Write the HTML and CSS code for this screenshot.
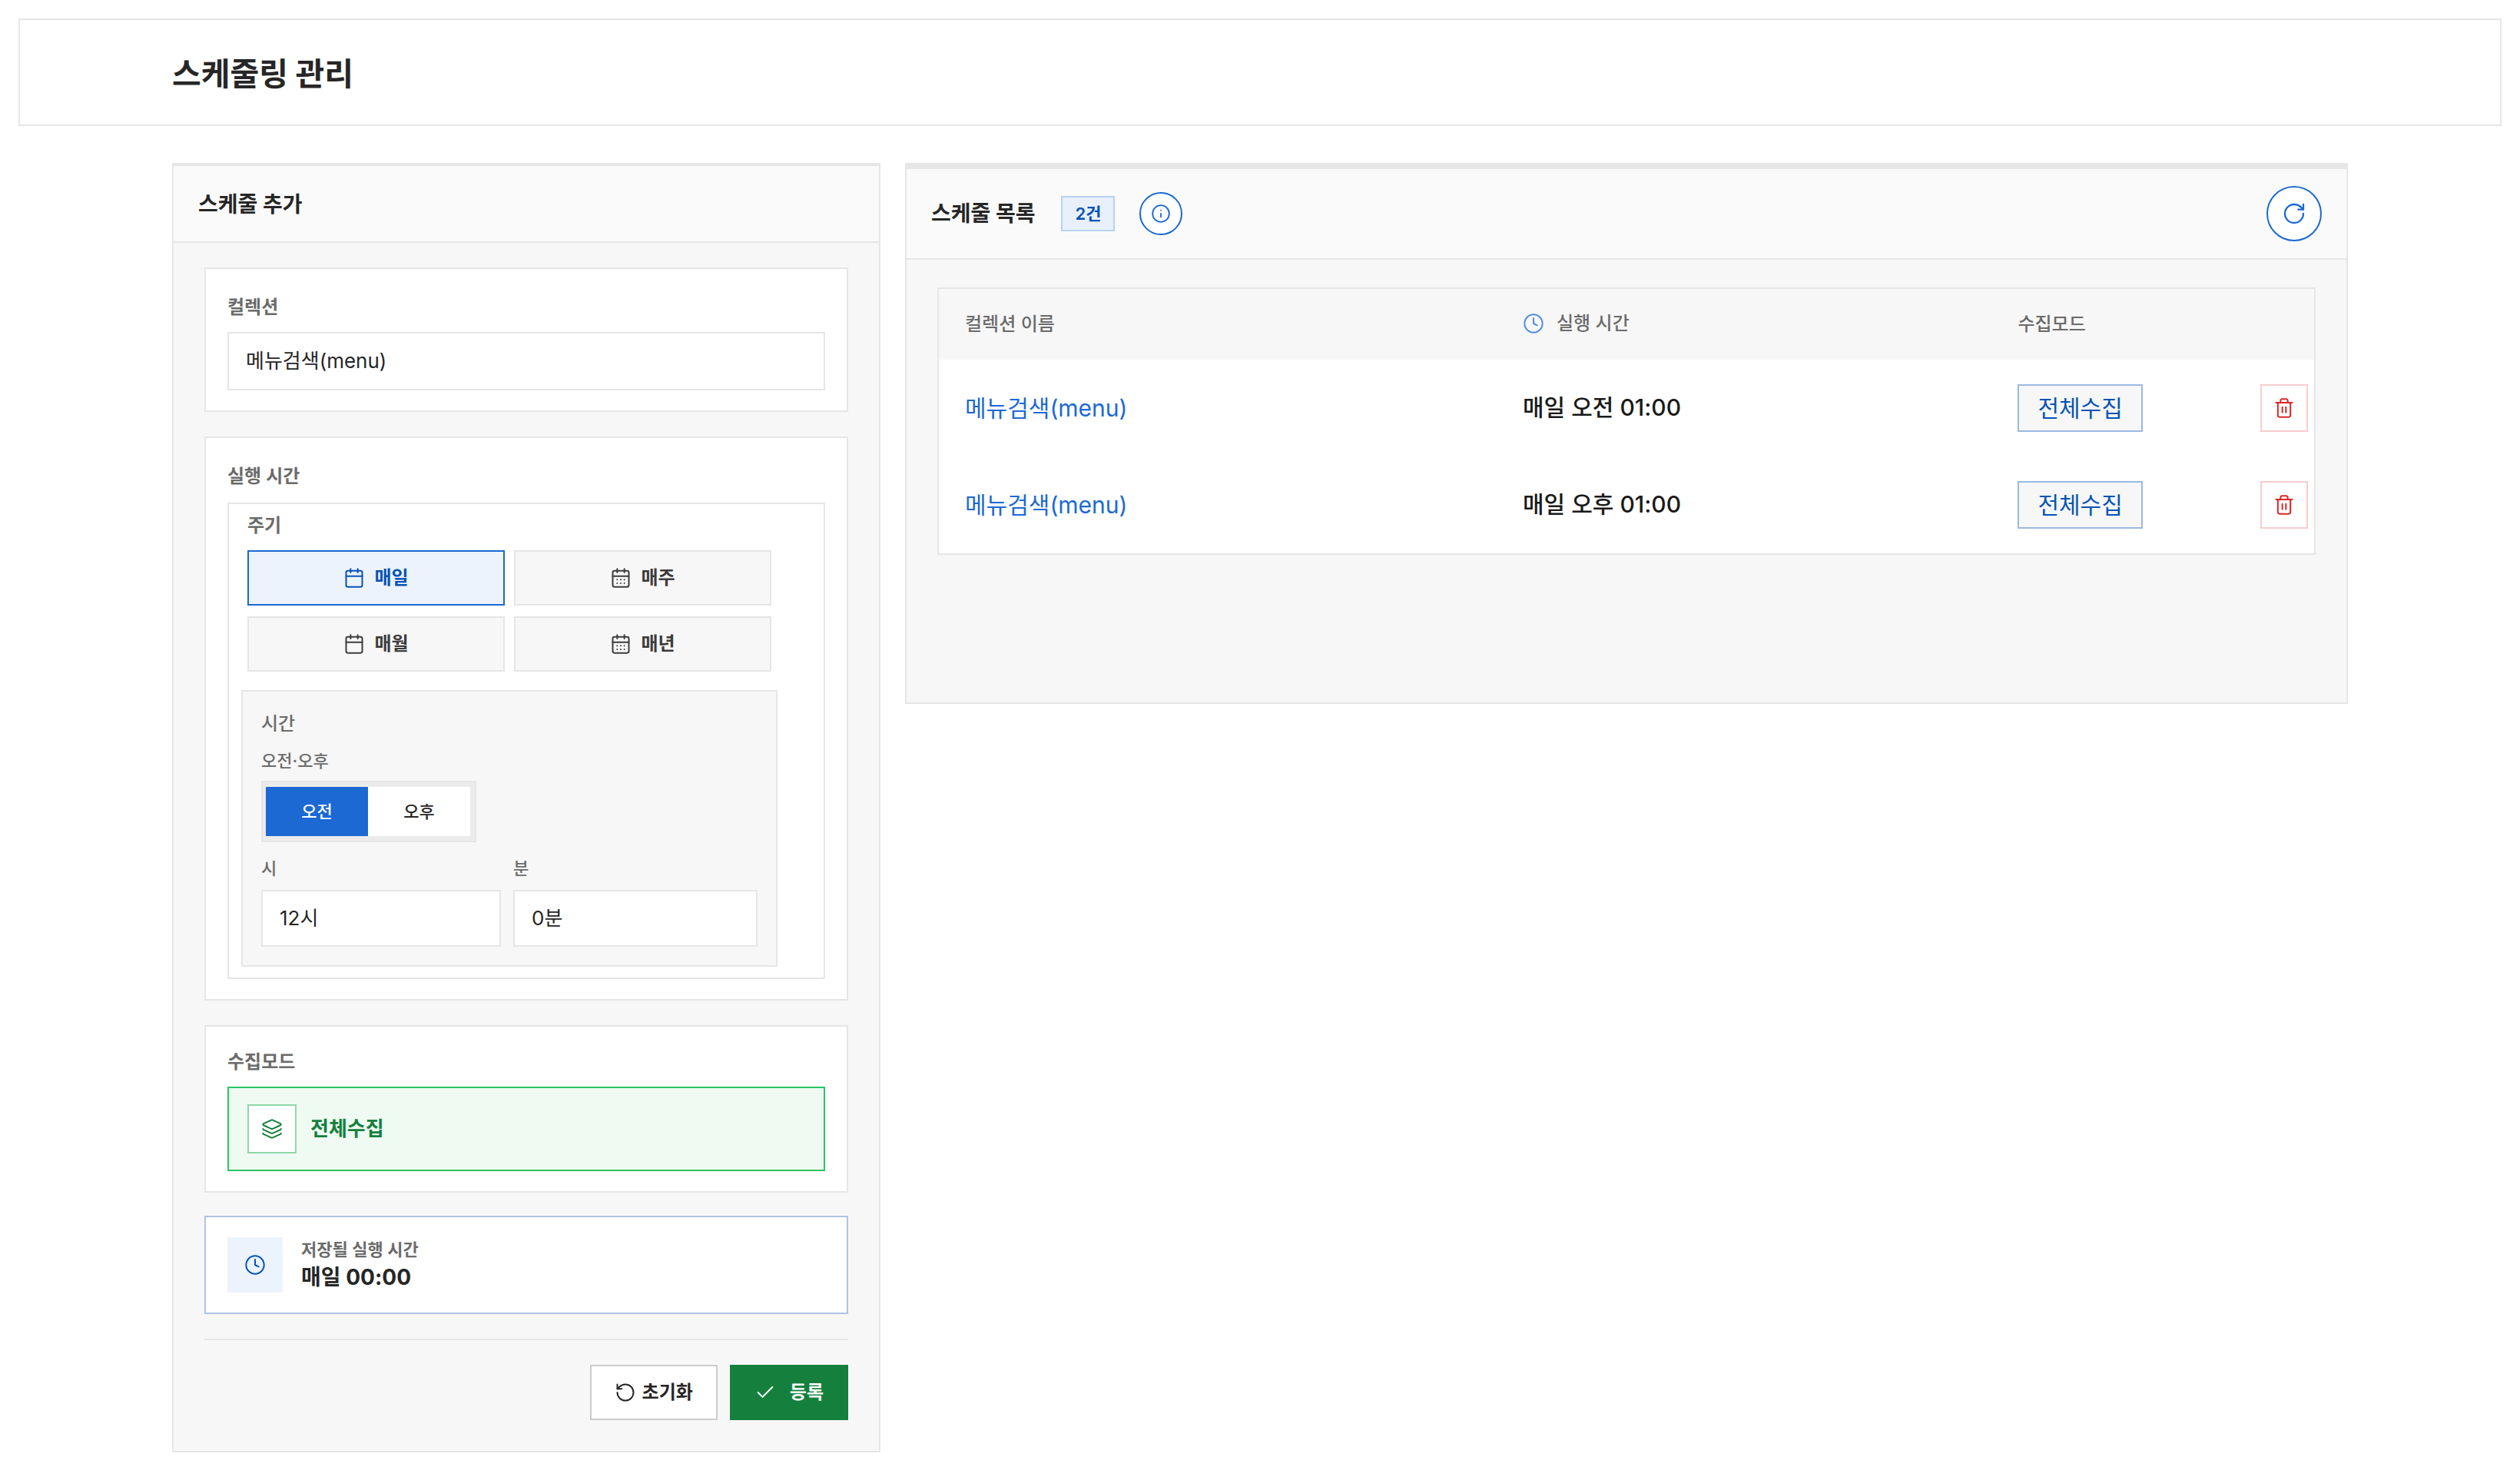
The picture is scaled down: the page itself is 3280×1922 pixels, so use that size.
FILE: index.html
```html
<!DOCTYPE html>
<html lang="ko">
<head>
    <meta charset="UTF-8">
    <meta name="viewport" content="width=device-width, initial-scale=1.0">
    <title>스케줄링 관리</title>
    <link rel="stylesheet" href="styles.css">
</head>
<body>
    <!-- Shared icons -->
    <svg class="sprite" aria-hidden="true">
        <symbol id="i-calendar" viewBox="0 0 24 24"><rect x="3" y="4" width="18" height="18" rx="2"/><path d="M8 2v4M16 2v4M3 10h18"/></symbol>
        <symbol id="i-days" viewBox="0 0 24 24"><rect x="3" y="4" width="18" height="18" rx="2"/><path d="M8 2v4M16 2v4M3 10h18M8 14h.01M12 14h.01M16 14h.01M8 18h.01M12 18h.01M16 18h.01"/></symbol>
        <symbol id="i-clock" viewBox="0 0 24 24"><circle cx="12" cy="12" r="10"/><path d="M12 6v6l4 2"/></symbol>
        <symbol id="i-info" viewBox="0 0 24 24"><circle cx="12" cy="12" r="10"/><path d="M12 16v-4M12 8h.01"/></symbol>
        <symbol id="i-layers" viewBox="0 0 24 24"><path d="M12.83 2.18a2 2 0 0 0-1.66 0L2.6 6.08a1 1 0 0 0 0 1.83l8.58 3.91a2 2 0 0 0 1.66 0l8.58-3.9a1 1 0 0 0 0-1.83z"/><path d="M2 12a1 1 0 0 0 .58.91l8.6 3.91a2 2 0 0 0 1.65 0l8.58-3.9A1 1 0 0 0 22 12"/><path d="M2 17a1 1 0 0 0 .58.91l8.6 3.91a2 2 0 0 0 1.65 0l8.58-3.9A1 1 0 0 0 22 17"/></symbol>
        <symbol id="i-refresh" viewBox="0 0 24 24"><path d="M21 12a9 9 0 1 1-9-9c2.52 0 4.93 1 6.74 2.74L21 8"/><path d="M21 3v5h-5"/></symbol>
        <symbol id="i-reset" viewBox="0 0 24 24"><path d="M3 12a9 9 0 1 0 9-9 9.75 9.75 0 0 0-6.74 2.74L3 8"/><path d="M3 3v5h5"/></symbol>
        <symbol id="i-check" viewBox="0 0 24 24"><path d="M20 6 9 17l-5-5"/></symbol>
        <symbol id="i-trash" viewBox="0 0 24 24"><path d="M3 6h18M19 6v14a2 2 0 0 1-2 2H7a2 2 0 0 1-2-2V6M8 6V4a2 2 0 0 1 2-2h4a2 2 0 0 1 2 2v2M10 11v6M14 11v6"/></symbol>
    </svg>

    <header class="page-header">
        <h1 class="page-title">스케줄링 관리</h1>
    </header>

    <main class="layout">
        <section class="panel">
            <div class="panel-header">
                <h2 class="panel-title">스케줄 추가</h2>
            </div>
            <form class="panel-body">
                <div class="card">
                    <label class="label" for="collection">컬렉션</label>
                    <select class="field" id="collection">
                        <option>메뉴검색(menu)</option>
                    </select>
                </div>

                <div class="card card-time">
                    <div class="label">실행 시간</div>
                    <div class="picker">
                        <div class="period">
                            <div class="label">주기</div>
                            <div class="period-grid">
                                <button type="button" class="period-btn active"><svg class="icon"><use href="#i-calendar"/></svg>매일</button>
                                <button type="button" class="period-btn"><svg class="icon"><use href="#i-days"/></svg>매주</button>
                                <button type="button" class="period-btn"><svg class="icon"><use href="#i-calendar"/></svg>매월</button>
                                <button type="button" class="period-btn"><svg class="icon"><use href="#i-days"/></svg>매년</button>
                            </div>
                        </div>
                        <div class="time-box">
                            <div class="time-title">시간</div>
                            <div class="sub-label">오전·오후</div>
                            <div class="segment">
                                <button type="button" class="segment-btn active">오전</button>
                                <button type="button" class="segment-btn">오후</button>
                            </div>
                            <div class="time-grid">
                                <div>
                                    <label class="sub-label" for="hour">시</label>
                                    <select class="field" id="hour"><option>12시</option></select>
                                </div>
                                <div>
                                    <label class="sub-label" for="minute">분</label>
                                    <select class="field" id="minute"><option>0분</option></select>
                                </div>
                            </div>
                        </div>
                    </div>
                </div>

                <div class="card card-mode">
                    <div class="label">수집모드</div>
                    <button type="button" class="mode-option">
                        <span class="mode-icon"><svg class="icon"><use href="#i-layers"/></svg></span>
                        전체수집
                    </button>
                </div>

                <div class="card preview">
                    <span class="preview-icon"><svg class="icon"><use href="#i-clock"/></svg></span>
                    <div>
                        <div class="preview-label">저장될 실행 시간</div>
                        <div class="preview-value">매일 00:00</div>
                    </div>
                </div>

                <div class="actions">
                    <button type="reset" class="btn btn-reset"><svg class="icon"><use href="#i-reset"/></svg>초기화</button>
                    <button type="submit" class="btn btn-submit"><svg class="icon"><use href="#i-check"/></svg>등록</button>
                </div>
            </form>
        </section>

        <section class="panel panel-list">
            <div class="panel-header">
                <h2 class="panel-title">스케줄 목록</h2>
                <span class="count">2건</span>
                <button type="button" class="round-btn info-btn" aria-label="안내"><svg class="icon"><use href="#i-info"/></svg></button>
                <button type="button" class="round-btn refresh-btn" aria-label="새로고침"><svg class="icon"><use href="#i-refresh"/></svg></button>
            </div>
            <div class="list-body">
                <table class="schedule-table">
                    <thead>
                        <tr>
                            <th class="col-name">컬렉션 이름</th>
                            <th class="col-time"><span class="th-time"><svg class="icon"><use href="#i-clock"/></svg>실행 시간</span></th>
                            <th class="col-mode">수집모드</th>
                            <th class="col-action"></th>
                        </tr>
                    </thead>
                    <tbody>
                        <tr>
                            <td><a class="name-link" href="#">메뉴검색(menu)</a></td>
                            <td class="time">매일 오전 01:00</td>
                            <td><button type="button" class="mode-btn">전체수집</button></td>
                            <td class="action"><button type="button" class="delete-btn" aria-label="삭제"><svg class="icon"><use href="#i-trash"/></svg></button></td>
                        </tr>
                        <tr>
                            <td><a class="name-link" href="#">메뉴검색(menu)</a></td>
                            <td class="time">매일 오후 01:00</td>
                            <td><button type="button" class="mode-btn">전체수집</button></td>
                            <td class="action"><button type="button" class="delete-btn" aria-label="삭제"><svg class="icon"><use href="#i-trash"/></svg></button></td>
                        </tr>
                    </tbody>
                </table>
            </div>
        </section>
    </main>
</body>
</html>
```
FILE: styles.css
```css
* {
    box-sizing: border-box;
}
body {
    margin: 0;
    padding: 24px;
    background: #fff;
    color: #262626;
    font-family: Inter, "Noto Sans CJK KR", sans-serif;
    font-size: 24px;
    line-height: 40px;
}
button, select {
    font: inherit;
    color: inherit;
    margin: 0;
    cursor: pointer;
}
.sprite {
    display: none;
}
.icon {
    width: 28px;
    height: 28px;
    flex: none;
    fill: none;
    stroke: currentColor;
    stroke-width: 1.7;
    stroke-linecap: round;
    stroke-linejoin: round;
}
.page-header {
    border: 2px solid #e6e6e6;
    padding: 40px 24px 36px;
    margin-bottom: 48px;
}
.page-title {
    max-width: 2832px;
    margin: 0 auto;
    font-size: 41px;
    line-height: 60px;
    font-weight: 700;
}
.layout {
    display: grid;
    grid-template-columns: 922fr 1878fr;
    gap: 32px;
    align-items: start;
    max-width: 2832px;
    margin: 0 auto;
}

/* Panels */
.panel {
    border: 2px solid #e6e6e6;
    border-top-width: 4px;
    background: #f7f7f7;
}
.panel-list {
    border-top-width: 8px;
}
.panel-header {
    display: flex;
    align-items: center;
    padding: 30px 32px 28px;
    background: #fafafa;
    border-bottom: 2px solid #e6e6e6;
}
.panel-list .panel-header {
    padding: 22px 32px;
}
.panel-title {
    margin: 0;
    font-size: 28px;
    line-height: 40px;
    font-weight: 700;
}
.panel-body {
    padding: 32px 40px 40px;
}
.card {
    background: #fff;
    border: 2px solid #e6e6e6;
    padding: 30px 28px 26px;
    margin-bottom: 32px;
}
.label {
    display: block;
    margin-bottom: 12px;
    color: #6b6b6b;
    font-weight: 600;
}
.field {
    display: block;
    width: 100%;
    height: 76px;
    padding: 0 22px;
    appearance: none;
    background: #fff;
    border: 2px solid #e6e6e6;
    border-radius: 0;
    color: #262626;
    font-size: 26px;
    font-weight: 400;
}

/* Run time */
.card-time > .label {
    margin-bottom: 14px;
}
.picker {
    border: 2px solid #e6e6e6;
    padding: 8px 60px 14px 16px;
}
.period {
    padding: 0 8px;
}
.period-grid {
    display: grid;
    grid-template-columns: 1fr 1fr;
    gap: 14px 12px;
}
.period-btn {
    display: flex;
    align-items: center;
    justify-content: center;
    gap: 12px;
    height: 72px;
    background: #f7f7f7;
    border: 2px solid #e6e6e6;
    color: #3c3c3c;
    font-weight: 600;
}
.period-btn.active {
    background: #ecf3fd;
    border-color: #1c69d4;
    color: #0653b6;
}
.time-box {
    margin-top: 24px;
    padding: 22px 24px 24px;
    background: #f7f7f7;
    border: 2px solid #e6e6e6;
    color: #6b6b6b;
    font-weight: 500;
}
.sub-label {
    display: block;
    margin: 8px 0 6px;
    font-size: 22px;
}
.segment {
    display: inline-flex;
    vertical-align: top;
    padding: 6px 6px 6px 4px;
    background: #ebebeb;
    border: 2px solid #e6e6e6;
}
.segment-btn {
    width: 133px;
    height: 64px;
    padding: 0;
    border: 0;
    background: #fff;
    color: #262626;
    font-size: 22px;
    font-weight: 500;
}
.segment-btn.active {
    background: #1c69d4;
    color: #fff;
}
.time-grid {
    display: grid;
    grid-template-columns: 312fr 318fr;
    gap: 16px;
    margin-top: 14px;
}
.time-grid .sub-label {
    margin: 0 0 8px;
}
.time-grid .field {
    height: 74px;
}

/* Collect mode */
.card-mode {
    padding-top: 26px;
    margin-bottom: 30px;
}
.mode-option {
    display: flex;
    align-items: center;
    gap: 18px;
    width: 100%;
    height: 110px;
    padding: 0 24px;
    background: #effaf2;
    border: 2px solid #2bc466;
    color: #15803d;
    font-size: 26px;
    font-weight: 700;
}
.mode-icon {
    display: flex;
    align-items: center;
    justify-content: center;
    width: 64px;
    height: 64px;
    background: #fff;
    border: 2px solid #8fd8aa;
}
.preview {
    display: flex;
    align-items: center;
    gap: 24px;
    padding: 26px 28px;
    border-color: #afc3e3;
}
.preview-icon {
    display: flex;
    align-items: center;
    justify-content: center;
    width: 72px;
    height: 72px;
    background: #ecf3fd;
    color: #0653b6;
}
.preview-label {
    color: #6b6b6b;
    font-size: 22px;
    line-height: 32px;
    font-weight: 600;
}
.preview-value {
    font-size: 28px;
    line-height: 40px;
    font-weight: 700;
}
.actions {
    display: flex;
    justify-content: flex-end;
    gap: 16px;
    padding-top: 32px;
    border-top: 2px solid #e6e6e6;
}
.btn {
    display: flex;
    align-items: center;
    height: 72px;
    padding: 0 32px;
    font-size: 24px;
    font-weight: 700;
}
.btn-reset {
    gap: 8px;
    padding: 0 30px;
    background: #fff;
    border: 2px solid #ccc;
}
.btn-submit {
    gap: 18px;
    background: #15803d;
    border: 0;
    color: #fff;
}

/* Schedule list */
.count {
    margin: 0 32px 0 34px;
    padding: 0 16px;
    background: #e8f0fb;
    border: 2px solid #b9d0f2;
    color: #0653b6;
    font-size: 22px;
    line-height: 42px;
    font-weight: 600;
}
.round-btn {
    display: flex;
    align-items: center;
    justify-content: center;
    width: 72px;
    height: 72px;
    padding: 0;
    background: #fff;
    border: 2px solid #1c69d4;
    border-radius: 50%;
    color: #1c69d4;
}
.info-btn {
    width: 56px;
    height: 56px;
}
.info-btn .icon {
    width: 26px;
    height: 26px;
}
.refresh-btn {
    margin-left: auto;
}
.refresh-btn .icon {
    width: 32px;
    height: 32px;
}
.list-body {
    min-height: 576px;
    padding: 36px 40px;
}
.schedule-table {
    width: 100%;
    table-layout: fixed;
    border-spacing: 0;
    background: #fff;
    border: 2px solid #e6e6e6;
}
.schedule-table th {
    height: 92px;
    padding: 0 34px;
    background: #f7f7f7;
    color: #6b6b6b;
    font-weight: 500;
    text-align: left;
}
.schedule-table td {
    height: 126px;
    padding: 0 34px;
    font-size: 30px;
}
.schedule-table td.action {
    padding: 0 8px;
}
.col-name {
    width: 726px;
}
.col-time {
    width: 36%;
}
.col-action {
    width: 140px;
}
.th-time {
    display: flex;
    align-items: center;
    gap: 16px;
    padding-bottom: 2px;
}
.th-time .icon {
    color: #4f8ee6;
}
.name-link {
    color: #1c69d4;
    text-decoration: none;
}
.schedule-table td.time {
    padding-bottom: 2px;
    font-weight: 500;
    color: #1a1a1a;
}
.mode-btn {
    display: block;
    height: 62px;
    padding: 0 24px;
    background: #f7f7f7;
    border: 2px solid #9bb9e2;
    color: #0653b6;
}
.delete-btn {
    display: flex;
    align-items: center;
    justify-content: center;
    width: 62px;
    height: 62px;
    margin-left: auto;
    padding: 0;
    background: #fff;
    border: 2px solid #f6cdcd;
    color: #dc2626;
}
```
